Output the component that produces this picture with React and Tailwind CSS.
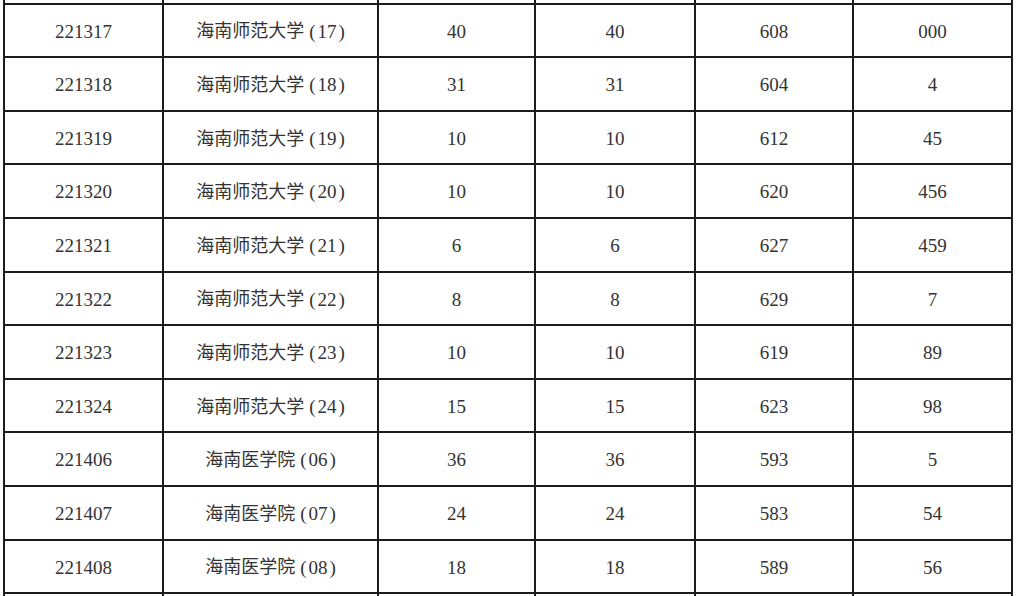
import React from "react";

const rows = [
  ["221317", ["海南师范大学", "17"], "40", "40", "608", "000"],
  ["221318", ["海南师范大学", "18"], "31", "31", "604", "4"],
  ["221319", ["海南师范大学", "19"], "10", "10", "612", "45"],
  ["221320", ["海南师范大学", "20"], "10", "10", "620", "456"],
  ["221321", ["海南师范大学", "21"], "6", "6", "627", "459"],
  ["221322", ["海南师范大学", "22"], "8", "8", "629", "7"],
  ["221323", ["海南师范大学", "23"], "10", "10", "619", "89"],
  ["221324", ["海南师范大学", "24"], "15", "15", "623", "98"],
  ["221406", ["海南医学院", "06"], "36", "36", "593", "5"],
  ["221407", ["海南医学院", "07"], "24", "24", "583", "54"],
  ["221408", ["海南医学院", "08"], "18", "18", "589", "56"],
];

const blank = ["", null, "", "", "", ""];
const all = [blank, ...rows, blank];

function Cell({ children }) {
  return (
    <div className="flex items-center justify-center border-r-2 border-b-2 border-[#1c1c1c] pt-[3px]">
      {children}
    </div>
  );
}

export default function App() {
  return (
    <div className="h-[596px] w-[1016px] overflow-hidden bg-white pl-[3px]">
      <div
        className="mt-[-49px] grid grid-cols-[159px_215px_157px_160px_158px_159px] auto-rows-[53.6px] border-l-2 border-[#1c1c1c] w-max text-[19px] text-[#333]"
        style={{ fontFamily: '"Liberation Serif", "Noto Sans CJK SC", serif' }}
      >
        {all.map((r, i) => (
          <React.Fragment key={i}>
            <Cell>{r[0]}</Cell>
            <Cell>
              {r[1] && (
                <span className="flex items-center">
                  <span className="text-[18px]">{r[1][0]}</span>
                  <span className="ml-[5px]">(</span>
                  <span className="mx-[2px]">{r[1][1]}</span>
                  <span>)</span>
                </span>
              )}
            </Cell>
            <Cell>{r[2]}</Cell>
            <Cell>{r[3]}</Cell>
            <Cell>{r[4]}</Cell>
            <Cell>{r[5]}</Cell>
          </React.Fragment>
        ))}
      </div>
    </div>
  );
}
